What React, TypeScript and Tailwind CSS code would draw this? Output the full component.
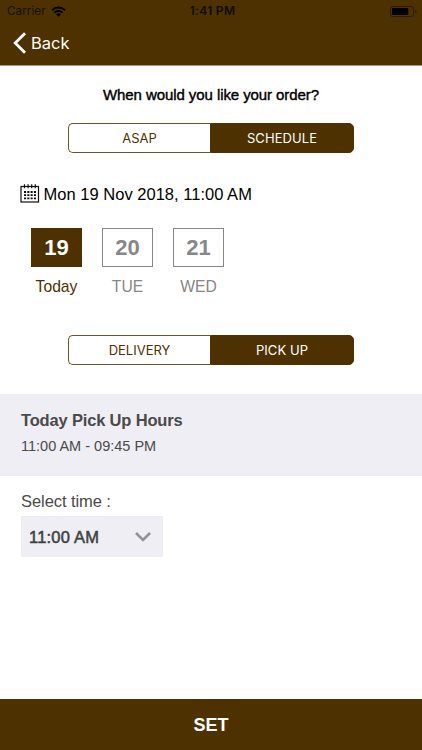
import React from "react";

type SegmentedProps = { left: string; right: string };

function Segmented({ left, right }: SegmentedProps) {
  return (
    <div className="ml-[68px] flex h-[30px] w-[286px] font-['Inter','Liberation_Sans',sans-serif] text-[13px] leading-[28px]">
      <button className="w-[142px] rounded-l-[5px] border border-r-0 border-[#6b552c] bg-white text-center text-[#4d3200]">
        {left}
      </button>
      <button className="flex-1 rounded-r-[5px] border border-[#4d3200] bg-[#4d3200] text-center tracking-[0.08px] text-white">
        {right}
      </button>
    </div>
  );
}

type DayProps = { date: string; label: string; active?: boolean };

function Day({ date, label, active = false }: DayProps) {
  return (
    <button className={`w-[51px] ${active ? "text-[#4d3200]" : "text-[#878787]"}`}>
      <span
        className={`flex h-[39px] items-center justify-center border pt-[1px] text-[22px] leading-none font-bold ${
          active ? "border-[#4d3200] bg-[#4d3200] text-white" : "border-[#878787] bg-white"
        }`}
      >
        {date}
      </span>
      <span className="mt-[10px] block text-[15.7px] leading-[20px] whitespace-nowrap">{label}</span>
    </button>
  );
}

function Wifi() {
  return (
    <svg className="ml-[5px] h-[11px] w-[15px]" viewBox="0 0 15 11" fill="none" stroke="#000" strokeWidth="2">
      <path d="M1 4.2A9.2 9.2 0 0 1 14 4.2" />
      <path d="M3.4 6.7A5.8 5.8 0 0 1 11.6 6.7" />
      <path d="M7.5 10.8 5.1 8.4A3.4 3.4 0 0 1 9.9 8.4Z" fill="#000" stroke="none" />
    </svg>
  );
}

function Battery() {
  return (
    <svg className="h-[11px] w-[27px]" viewBox="0 0 27 11">
      <rect x="0.5" y="0.5" width="23" height="10" rx="2.3" fill="none" stroke="#2b1c00" />
      <rect x="2" y="2" width="16.3" height="7" rx="0.8" fill="#000" />
      <path d="M25 3.8Q26.5 4.3 26.5 5.5T25 7.2Z" fill="#2b1c00" />
    </svg>
  );
}

function Calendar() {
  return (
    <svg className="h-[20px] w-[20px]" viewBox="0 0 20 20" fill="none" stroke="#111" strokeWidth="1">
      <rect x="1" y="2.5" width="17.5" height="15.5" strokeWidth="1.2" />
      <path d="M4.5 0.3v4M8.1 0.3v4M11.7 0.3v4M15.3 0.3v4" strokeWidth="1.2" />
      <path d="M4 8h12M4 11.2h12M4 14.4h12" strokeWidth="1.8" strokeDasharray="2.1 1.2" />
    </svg>
  );
}

export default function App() {
  return (
    <div className="flex h-[750px] w-[422px] flex-col overflow-hidden bg-white font-['Liberation_Sans',Arial,sans-serif]">
      <header className="h-[65px] shrink-0 bg-[#4d3200] shadow-[0_1px_0_#a69880]">
        <div className="grid h-[22px] grid-cols-3 items-center px-[7px] font-['Inter','Liberation_Sans',sans-serif] text-[12px] leading-[22px] text-black">
          <div className="flex items-center text-[11.8px] text-[#181000]">
            Carrier
            <Wifi />
          </div>
          <div className="pl-[3px] text-center text-[12px] font-semibold tracking-[0.3px] text-[#120c00]">1:41 PM</div>
          <div className="-mr-[2px] flex justify-end">
            <Battery />
          </div>
        </div>
        <button className="ml-[13px] flex h-[42px] items-center font-['Inter','Liberation_Sans',sans-serif] text-[16.5px] leading-[20px] text-white">
          <svg className="h-[22px] w-[14px]" viewBox="0 0 14 22" fill="none" stroke="#fff" strokeWidth="2.8">
            <path d="M12 1.2 2.2 11 12 20.8" />
          </svg>
          <span className="ml-[4px]">Back</span>
        </button>
      </header>

      <main className="flex flex-1 flex-col">
        <h1 className="mt-[20px] text-center text-[15px] leading-[20px] tracking-[-0.08px] text-black [-webkit-text-stroke:0.4px_#000]">
          When would you like your order?
        </h1>
        <div className="mt-[18px]">
          <Segmented left="ASAP" right="SCHEDULE" />
        </div>

        <div className="mt-[31px] ml-[20px] flex h-[20px] items-center text-[16.5px] leading-[20px] text-black">
          <Calendar />
          <span className="ml-[3.5px] tracking-[0.02px]">Mon 19 Nov 2018, 11:00 AM</span>
        </div>

        <div className="mt-[24px] ml-[31px] flex gap-[20px]">
          <Day date="19" label="Today" active />
          <Day date="20" label="TUE" />
          <Day date="21" label="WED" />
        </div>

        <div className="mt-[38px]">
          <Segmented left="DELIVERY" right="PICK UP" />
        </div>

        <section className="mt-[29px] h-[82px] bg-[#efeef4] pt-[16px] pl-[21px] text-[#4a4a4a]">
          <h2 className="text-[16.5px] leading-[20px] font-bold tracking-[-0.17px]">Today Pick Up Hours</h2>
          <p className="mt-[7px] text-[14.5px] leading-[18px]">11:00 AM - 09:45 PM</p>
        </section>

        <label className="mt-[15px] ml-[21px] text-[16.5px] leading-[20px] tracking-[-0.07px] text-[#4a4a4a]">
          Select time :
        </label>
        <button className="mt-[5px] ml-[21px] flex h-[41px] w-[142px] items-center justify-between bg-[#efeef4] pt-[1px] pr-[12px] pl-[8px] text-[16.5px] text-[#404040]">
          <span className="tracking-[0.2px] [-webkit-text-stroke:0.5px_#404040]">11:00 AM</span>
          <svg className="h-[10px] w-[16px]" viewBox="0 0 16 10" fill="none" stroke="#929292" strokeWidth="2.6">
            <path d="M1 1 8 8 15 1" />
          </svg>
        </button>
      </main>

      <button className="h-[51px] shrink-0 bg-[#4d3200] pt-[2px] text-[18px] font-bold text-white">SET</button>
    </div>
  );
}
